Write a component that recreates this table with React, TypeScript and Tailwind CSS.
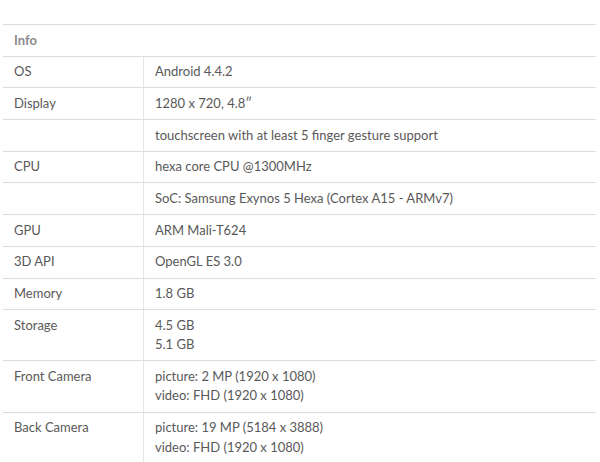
import React from "react";

type Spec = { label: string; values: string[] };

const specs: Spec[] = [
  { label: "OS", values: ["Android 4.4.2"] },
  { label: "Display", values: ["1280 x 720, 4.8\u2033"] },
  { label: "", values: ["touchscreen with at least 5 finger gesture support"] },
  { label: "CPU", values: ["hexa core CPU @1300MHz"] },
  { label: "", values: ["SoC: Samsung Exynos 5 Hexa (Cortex A15 - ARMv7)"] },
  { label: "GPU", values: ["ARM Mali-T624"] },
  { label: "3D API", values: ["OpenGL ES 3.0"] },
  { label: "Memory", values: ["1.8 GB"] },
  { label: "Storage", values: ["4.5 GB", "5.1 GB"] },
  { label: "Front Camera", values: ["picture: 2 MP (1920 x 1080)", "video: FHD (1920 x 1080)"] },
  { label: "Back Camera", values: ["picture: 19 MP (5184 x 3888)", "video: FHD (1920 x 1080)"] },
];

const SpecRow: React.FC<Spec> = ({ label, values }) => {
  return (
    <div className="flex border-t border-[#dcdcdc]">
      <div className="w-[140px] shrink-0 px-[11px] py-[5.6px]">{label}</div>
      <div className="flex-1 border-l border-[#e6e6e6] px-[11px] py-[5.6px]">
        {values.map((v, i) => (
          <div key={i}>{v}</div>
        ))}
      </div>
    </div>
  );
};

export default function App() {
  return (
    <div className="h-[462px] w-[600px] overflow-hidden bg-white pt-[24px] pl-[3px] pr-[4px] font-['Lato','Liberation_Sans',sans-serif] text-[13px] leading-[19.5px] text-[#595959]">
      <div className="border-t border-[#dcdcdc]">
        <div className="px-[11px] py-[5.6px] font-bold text-[#8a8a8a]">Info</div>
        {specs.map((s, i) => (
          <SpecRow key={i} {...s} />
        ))}
      </div>
    </div>
  );
}
